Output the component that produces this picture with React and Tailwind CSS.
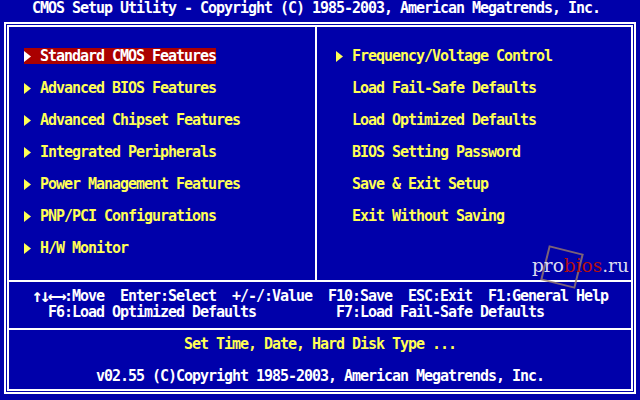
const mono = "font-['DejaVu_Sans_Mono','Liberation_Mono',monospace] text-[15px] leading-4 font-bold tracking-[-1.03px] whitespace-pre";

const leftItems = [
  "Standard CMOS Features",
  "Advanced BIOS Features",
  "Advanced Chipset Features",
  "Integrated Peripherals",
  "Power Management Features",
  "PNP/PCI Configurations",
  "H/W Monitor",
];

const rightItems = [
  { label: "Frequency/Voltage Control", sub: true },
  { label: "Load Fail-Safe Defaults" },
  { label: "Load Optimized Defaults" },
  { label: "BIOS Setting Password" },
  { label: "Save & Exit Setup" },
  { label: "Exit Without Saving" },
];

function Arrow({ show = true }) {
  return (
    <svg width="8" height="16" viewBox="0 0 8 16" className="shrink-0">
      {show && <polygon points="0,3 7,8.5 0,14" fill="currentColor" />}
    </svg>
  );
}

function MenuItem({ label, sub = true, active = false }) {
  return (
    <div className="flex h-4">
      <div className={`flex h-4 ${active ? "bg-[#aa0000] text-white" : "text-[#ffff55]"}`}>
        <Arrow show={sub} />
        <span className="w-2" />
        <span className={mono}>{label}</span>
      </div>
    </div>
  );
}

export default function App() {
  return (
    <div className="relative w-[640px] h-[400px] bg-[#0000aa] overflow-hidden">
      <div className={`${mono} h-4 pl-[32px] text-white`}>
        CMOS Setup Utility - Copyright (C) 1985-2003, American Megatrends, Inc.
      </div>

      <div className="mt-[6px] mx-[4px] h-[372px] border-2 border-white p-px">
        <div className="h-full border-2 border-white flex flex-col">
          {/* menu panels */}
          <div className="flex h-[255px] border-b-2 border-white">
            <div className="w-[308px] border-r-2 border-white pt-[21px] pl-[15px] flex flex-col gap-4">
              {leftItems.map((item, i) => (
                <MenuItem key={item} label={item} active={i === 0} />
              ))}
            </div>
            <div className="flex-1 pt-[21px] pl-[19px] flex flex-col gap-4">
              {rightItems.map((item) => (
                <MenuItem key={item.label} label={item.label} sub={!!item.sub} />
              ))}
            </div>
          </div>

          {/* key help */}
          <div className="h-[48px] border-b-2 border-white pt-[6px] text-white">
            <div className="flex h-4 pl-[23px]">
              <span className="font-['DejaVu_Sans_Mono',monospace] text-[18px] leading-4 font-bold tracking-[-2.84px] whitespace-pre">↑↓←→</span>
              <span className={mono}>:Move  Enter:Select  +/-/:Value  F10:Save  ESC:Exit  F1:General Help</span>
            </div>
            <div className="flex pl-[39px]">
              <span className={`${mono} w-[288px]`}>F6:Load Optimized Defaults</span>
              <span className={mono}>F7:Load Fail-Safe Defaults</span>
            </div>
          </div>

          {/* status */}
          <div className="flex-1 pt-[6px]">
            <div className={`${mono} pl-[175px] text-[#ffff55]`}>Set Time, Date, Hard Disk Type ...</div>
            <div className={`${mono} pl-[87px] mt-4 text-white`}>
              v02.55 (C)Copyright 1985-2003, American Megatrends, Inc.
            </div>
          </div>
        </div>
      </div>

      {/* watermark */}
      <div className="absolute left-[544px] top-[249px] w-[36px] h-[36px] border-2 border-[#9a7a6a]/80 rotate-[14deg]" />
      <div className="absolute left-[532px] top-[257px] font-['DejaVu_Serif','Liberation_Serif',serif] text-[18.5px] leading-none whitespace-pre">
        <span className="text-[#dcdcf0]">pro</span>
        <span className="text-[#b01010]">bios</span>
        <span className="text-[#dcdcf0]">.ru</span>
      </div>
    </div>
  );
}
